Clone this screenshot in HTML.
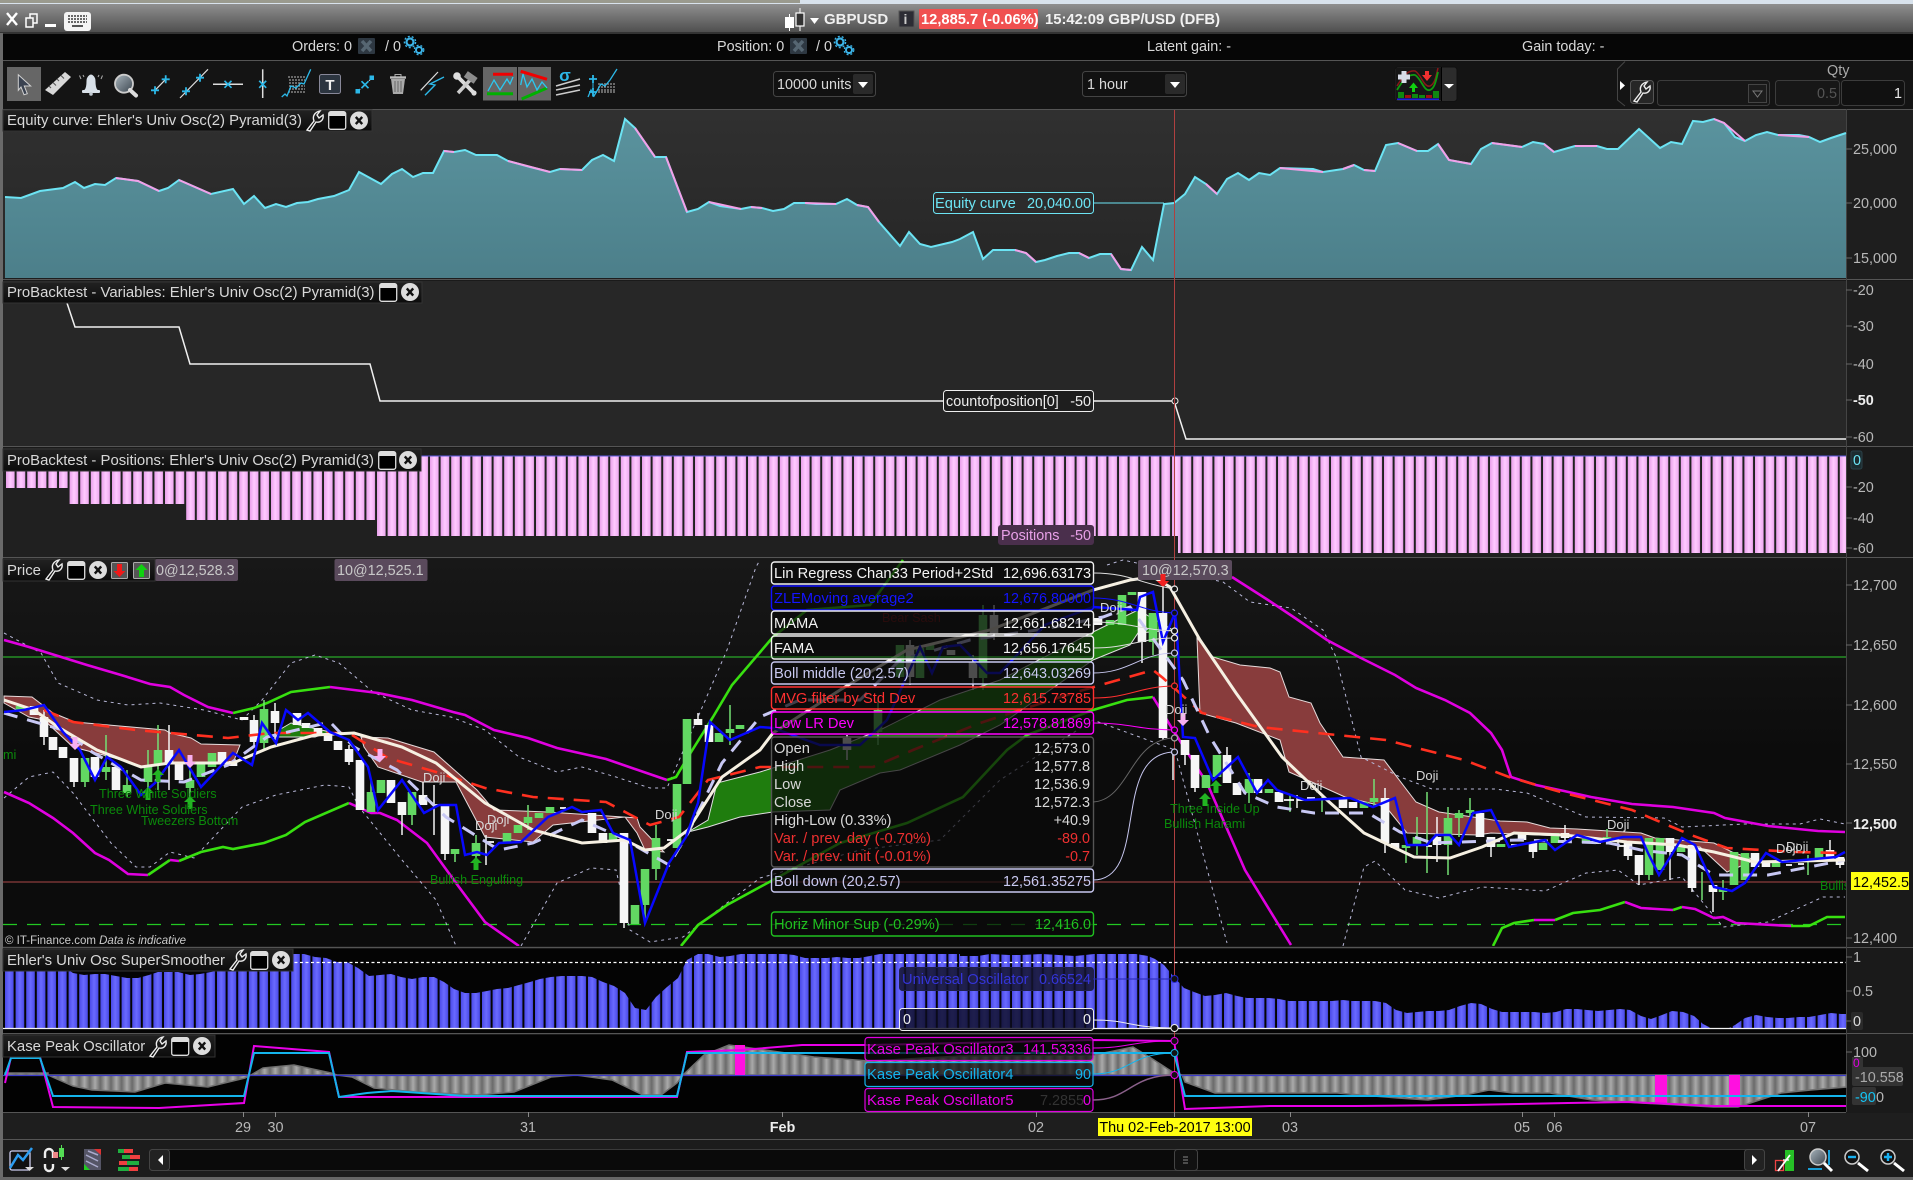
<!DOCTYPE html>
<html>
<head>
<meta charset="utf-8">
<title>GBPUSD chart</title>
<style>
html,body{margin:0;padding:0;background:#1a1a1a;width:1913px;height:1180px;overflow:hidden}
svg{display:block;position:absolute;left:0;top:0}
text{font-family:"Liberation Sans",sans-serif;font-size:14.4px;fill:#d8d8d8}
.t{font-size:14.9px}
.l{font-size:14.7px}
.ax{fill:#b8b8b8}
.end{text-anchor:end}
.mid{text-anchor:middle}
.pat{font-size:12.6px;fill:#0b8a0b}
.doj{font-size:13px;fill:#d8d8d8}
.none{fill:none}
</style>
</head>
<body>
<svg width="1913" height="1180" viewBox="0 0 1913 1180" xmlns="http://www.w3.org/2000/svg">
<defs>
<linearGradient id="tb" x1="0" y1="0" x2="0" y2="1"><stop offset="0" stop-color="#8f8f8f"/><stop offset="1" stop-color="#4f4f4f"/></linearGradient>
<linearGradient id="eq" x1="0" y1="0" x2="0" y2="1"><stop offset="0" stop-color="#5a939e"/><stop offset="1" stop-color="#4c7f8a"/></linearGradient>
<linearGradient id="eb" x1="0" y1="0" x2="0" y2="1"><stop offset="0" stop-color="#303030"/><stop offset="1" stop-color="#262626"/></linearGradient>
<linearGradient id="pb" x1="0" y1="0" x2="0" y2="1"><stop offset="0" stop-color="#181818"/><stop offset=".5" stop-color="#0c0c0c"/><stop offset="1" stop-color="#0c0c0c"/></linearGradient>
<linearGradient id="tt" x1="0" y1="0" x2="0" y2="1"><stop offset="0" stop-color="#222"/><stop offset="1" stop-color="#0c0c0c"/></linearGradient>
<linearGradient id="pk" x1="0" y1="0" x2="1" y2="0"><stop offset="0" stop-color="#e8a0ea"/><stop offset=".5" stop-color="#ffcaff"/><stop offset="1" stop-color="#eea8f0"/></linearGradient>
<linearGradient id="bl" x1="0" y1="0" x2="1" y2="0"><stop offset="0" stop-color="#4a4ae8"/><stop offset=".5" stop-color="#6a6aff"/><stop offset="1" stop-color="#4a4ae8"/></linearGradient>
<linearGradient id="gy" x1="0" y1="0" x2="1" y2="0"><stop offset="0" stop-color="#6a6a6a"/><stop offset=".5" stop-color="#aaaaaa"/><stop offset="1" stop-color="#6a6a6a"/></linearGradient>
<linearGradient id="mg" x1="0" y1="0" x2="1" y2="1"><stop offset="0" stop-color="#a8b4bc"/><stop offset="1" stop-color="#3c4650"/></linearGradient>
<pattern id="ppk" patternUnits="userSpaceOnUse" x="6" y="0" width="10.6" height="20"><rect width="8.6" height="20" fill="url(#pk)"/></pattern>
<pattern id="pbl" patternUnits="userSpaceOnUse" x="5" y="0" width="10.6" height="20"><rect width="8.6" height="20" fill="url(#bl)"/></pattern>
<pattern id="pgy" patternUnits="userSpaceOnUse" x="5" y="0" width="10.6" height="20"><rect width="10.6" height="20" fill="url(#gy)"/></pattern>
<clipPath id="cp"><rect x="3" y="559" width="1843" height="387"/></clipPath>
<g id="wr"><path d="M1 20 L8 11 C6 6 9 2 14 1 L11 5 L13 8 L17 5 C18 10 14 13 10 12 L4 21Z" fill="none" stroke="#eee" stroke-width="1.4"/></g>
<g id="win"><rect x="0.7" y="0.7" width="17" height="17.6" rx="2" fill="#000" stroke="#ddd" stroke-width="1.3"/><rect x="1" y="1" width="16.4" height="4" fill="#ddd"/></g>
<g id="cl"><circle r="9" fill="#ddd"/><path d="M-3.2 -3.6L3.2 3.6M3.2 -3.6L-3.2 3.6" stroke="#111" stroke-width="2.4"/></g>
<g id="gr"><circle cx="4" cy="4" r="3.5" fill="none" stroke="#3cb4e8" stroke-width="2.2"/><circle cx="4" cy="4" r="5.6" fill="none" stroke="#3cb4e8" stroke-width="1.4" stroke-dasharray="2 2"/><circle cx="13" cy="12" r="3" fill="none" stroke="#3cb4e8" stroke-width="2"/><circle cx="13" cy="12" r="4.8" fill="none" stroke="#3cb4e8" stroke-width="1.2" stroke-dasharray="2 2"/></g>
<g id="xb"><rect width="17" height="16" rx="1" fill="#2e3842"/><path d="M4 3L13 13M13 3L4 13" stroke="#566672" stroke-width="3.5"/></g>
<polygon id="ua" points="0,0 6,6 2.5,6 2.5,13 -2.5,13 -2.5,6 -6,6"/>
<polygon id="da" points="0,13 6,7 2.5,7 2.5,0 -2.5,0 -2.5,7 -6,7"/>
<g id="cx"><path d="M-3.5 -3.5L3.5 3.5M3.5 -3.5L-3.5 3.5" stroke="#2cb8e8" stroke-width="1.7"/></g>
<g id="cp2"><path d="M-4 0H4M0 -4V4" stroke="#2cb8e8" stroke-width="1.8"/></g>
</defs>

<!-- chrome -->
<rect width="1913" height="1180" fill="#1a1a1a"/>
<rect width="1913" height="4" fill="#d8e2ec"/>
<rect y="0" width="800" height="3" fill="#9a9a8e"/>
<rect y="4" width="1913" height="28" fill="url(#tb)"/>
<rect y="32" width="1913" height="2" fill="#333"/>
<rect y="34" width="1913" height="26" fill="#060606"/>
<rect y="60" width="1913" height="1" fill="#555"/>
<rect y="61" width="1913" height="48" fill="#141414"/>
<rect x="0" y="33" width="3" height="1147" fill="#6a6a6a"/>

<!-- title bar -->
<path d="M7 13L17 25M17 13L7 25" stroke="#fff" stroke-width="2.4"/>
<path d="M26 18h7v9h-7zM30 18v-4h7v9h-4" fill="none" stroke="#fff" stroke-width="1.5"/>
<rect x="45" y="24" width="11" height="3" fill="#fff"/>
<rect x="64" y="12" width="27" height="19" rx="3" fill="#f4f4f4"/>
<path d="M68 16h19M68 19h19M68 22h19" stroke="#555" stroke-width="1.8" stroke-dasharray="2 1"/><rect x="72" y="25" width="11" height="2" fill="#555"/>
<rect x="785" y="17" width="9" height="11" fill="#fff"/><path d="M789.500 14v17" stroke="#fff"/>
<rect x="796" y="13" width="8" height="13" fill="#333" stroke="#fff" stroke-width="1.2"/><path d="M800 8v5M800 26v5" stroke="#fff"/>
<path d="M810 18h9l-4.500 6z" fill="#fff"/>
<text x="824" y="24" style="font-size:15px;font-weight:bold;fill:#f0f0f0">GBPUSD</text>
<rect x="899" y="11" width="15" height="16" fill="#2c2c34" stroke="#555"/><text x="903.500" y="24" style="font-size:14px;font-weight:bold;fill:#ccc">i</text>
<rect x="919" y="9" width="119" height="20" rx="1" fill="#f05050"/>
<text x="921" y="24" style="font-size:14.700px;font-weight:bold;fill:#fff">12,885.7 (-0.06%)</text>
<text x="1045" y="24" style="font-size:15px;fill:#f2f2f2;font-weight:bold" textLength="175" lengthAdjust="spacingAndGlyphs">15:42:09 GBP/USD (DFB)</text>

<!-- orders row -->
<text x="292" y="51" >Orders: 0</text><use href="#xb" x="358" y="38"/><text x="385" y="51">/ 0</text><use href="#gr" x="406" y="38"/>
<text x="717" y="51">Position: 0</text><use href="#xb" x="790" y="38"/><text x="816" y="51">/ 0</text><use href="#gr" x="836" y="38"/>
<text x="1147" y="51">Latent gain: -</text>
<text x="1522" y="51">Gain today: -</text>

<!-- toolbar -->
<rect x="7" y="67" width="34" height="34" fill="#666"/>
<path d="M18.300 74.700L30.700 86L24.300 86L27.300 93.700L24 94.700L21 87L18.300 90.300Z" fill="#3a4250" stroke="#d0d0d0" stroke-width="1"/>
<polygon points="45,90 65,72 71,77 53,95" fill="#d8d8d8"/><path d="M49 86l2 2M53 82.500l3 3M57 79l2 2M61 75.500l3 3" stroke="#555" stroke-width="1.100"/>
<path d="M85 90C87 88 87 84 87 81C87 77 90 75 91 75C92 75 95 77 95 81C95 84 95 88 97 90Z" fill="#d8e0e8" stroke="#d8e0e8"/><rect x="82" y="90" width="18" height="3" rx="1" fill="#d8e0e8"/><circle cx="91" cy="94" r="1.800" fill="#c0c8d0"/>
<path d="M79.500 75.500L81 79M83 75L84 77M102.500 75.500L101 79M99 75L98 77" stroke="#aaa" stroke-width="1"/>
<circle cx="124" cy="83.700" r="9" fill="url(#mg)" stroke="#ccc" stroke-width="1.800"/><path d="M130 90L136 95.500" stroke="#ddd" stroke-width="4" stroke-linecap="round"/>
<path d="M155 90.300L165.700 79.300" stroke="#ddd" stroke-width="1.200"/><use href="#cp2" x="155" y="90.300"/><use href="#cp2" x="165.700" y="79.300"/>
<path d="M180 98L208 69.300" stroke="#ddd" stroke-width="1.200"/><use href="#cp2" x="186" y="91.300"/><use href="#cp2" x="200" y="77.700"/>
<path d="M213 84.300H243" stroke="#ddd" stroke-width="1.500"/><use href="#cx" x="228" y="84.300"/>
<path d="M262.700 69.300V98" stroke="#ddd" stroke-width="1.500"/><use href="#cx" x="262.700" y="84.300"/>
<path d="M288 77h17M289 80h16M289 83h13M289 86h16M289 89h16M288 92h17" stroke="#bbb" stroke-width="1" stroke-dasharray="2 1"/>
<path d="M281.700 97L285 94L287 96L291 86L296 88L301 83L304 84L310.700 69.300" fill="none" stroke="#2cb8e8" stroke-width="1.300"/>
<rect x="319.500" y="74.500" width="21" height="19" rx="2" fill="#2c3540" stroke="#889"/><text x="330" y="90" class="mid" style="font-size:15px;font-weight:bold;fill:#eee">T</text>
<path d="M358 91L372 78" stroke="#ddd" stroke-dasharray="3 2" stroke-width="1"/><rect x="355.500" y="89" width="4.500" height="4.500" fill="#2cb8e8"/><rect x="369.500" y="75.500" width="4.500" height="4.500" fill="#2cb8e8"/><use href="#cx" x="365" y="84.700"/>
<path d="M390 77.500h16" stroke="#bbb" stroke-width="2.400"/><path d="M395 76.500v-2h6v2" fill="none" stroke="#aaa"/><path d="M391 79h14l-2 15h-10z" fill="#aaa"/><path d="M395 81v11M398 81v11M401 81v11" stroke="#666"/>
<path d="M420.700 90.300L438 72" stroke="#ddd" stroke-width="1.200"/><path d="M425 95.300L435 85L430 84L444 77" fill="none" stroke="#2cb8e8" stroke-width="1.400"/>
<path d="M457 76L474 93" stroke="#ddd" stroke-width="3.800"/><circle cx="457" cy="76" r="3.800" fill="#ddd"/><circle cx="474" cy="93" r="2.600" fill="#ddd"/><path d="M472 78L458 93" stroke="#ccc" stroke-width="3.500"/><rect x="465" y="74" width="12" height="7" fill="#8c8c8c" transform="rotate(35 471 77)"/>
<rect x="483" y="67" width="34" height="33.500" fill="#666"/><rect x="518" y="67" width="33" height="33.500" fill="#666"/>
<path d="M493 74.300h20" stroke="#f00000" stroke-width="3"/><path d="M487 93.700h26" stroke="#00b000" stroke-width="3"/><path d="M488 91L494 80L500 90L507 79L510 84L513 77" fill="none" stroke="#2cc8f0" stroke-width="1.300"/>
<path d="M520.700 71.300L547 79.300" stroke="#f00000" stroke-width="3"/><path d="M521.700 99L547 88" stroke="#00b000" stroke-width="3"/><path d="M520.700 85L523 74L527 87L532 79L537 90L542 82L547 88" fill="none" stroke="#2cc8f0" stroke-width="1.300"/>
<text x="565" y="81" class="mid" style="font-size:17px;font-weight:bold;fill:#2cb8e8">σ</text>
<path d="M556 86L580 79M556 90L580 85M556 95L580 90" stroke="#ccc" stroke-width="1.500"/>
<path d="M598 84h17M598 87h17M598 90h17M598 92h17" stroke="#bbb" stroke-width="1" stroke-dasharray="2 1"/>
<path d="M588 97L591 90L594 96L601 84L605 86L610 80L617 69" fill="none" stroke="#2cb8e8" stroke-width="1.300"/><path d="M593 77V97" stroke="#2cb8e8"/><use href="#cp2" x="593" y="79"/><use href="#cp2" x="593" y="92"/>

<!-- dropdowns -->
<rect x="773.500" y="71.500" width="102" height="25" rx="3" fill="#111" stroke="#444"/>
<text x="777" y="89">10000 units</text>
<rect x="853" y="74" width="20" height="20" rx="2" fill="#2a2a2a"/><path d="M858 82h10l-5 6z" fill="#fff"/>
<rect x="1082.500" y="71.500" width="104" height="25" rx="3" fill="#111" stroke="#444"/>
<text x="1087" y="89">1 hour</text>
<rect x="1165" y="74" width="20" height="20" rx="2" fill="#2a2a2a"/><path d="M1170 82h10l-5 6z" fill="#fff"/>
<rect x="1395" y="67" width="62" height="34.500" rx="3" fill="#2c2c2c" stroke="#111"/>
<rect x="1396" y="68" width="45" height="32" fill="#161616"/><path d="M1441.500 67V101" stroke="#000"/>
<path d="M1397 86C1403 76 1408 70 1415 71C1421 74 1424 88 1430 86C1435 84 1436 76 1438 68" fill="none" stroke="#8a1818" stroke-width="1.500"/>
<path d="M1397 90C1403 80 1408 74 1415 75C1421 78 1424 92 1430 90C1435 88 1436 80 1438 72" fill="none" stroke="#109a10" stroke-width="1.800"/>
<path d="M1404 71v12M1398 77h12" stroke="#d8dce8" stroke-width="5"/>
<path d="M1425 71h4v4h3l-5 6l-5-6h3z" fill="#f03030"/><path d="M1412 92h3v-4h3l-4.500-5.500l-4.500 5.500h3z" fill="#10d010"/>
<rect x="1398" y="92" width="6" height="6" fill="#108810"/><rect x="1405" y="95" width="6" height="3" fill="#a01010"/><rect x="1412" y="94" width="6" height="4" fill="#108810"/><rect x="1419" y="95" width="6" height="3" fill="#108810"/><rect x="1426" y="95" width="6" height="3" fill="#a01010"/><rect x="1433" y="91" width="6" height="7" fill="#108810"/>
<rect x="1397" y="98.500" width="42" height="1.500" fill="#2020e0"/>
<path d="M1444 84h10l-5 4.500z" fill="#fff"/>
<path d="M1625 61.500L1617.500 69V100L1625 106" fill="none" stroke="#444"/>
<path d="M1620 81v9l5-4.500z" fill="#fff"/>
<rect x="1630.500" y="80.500" width="23" height="23" rx="3" fill="#262626" stroke="#555"/><use href="#wr" x="1633" y="81"/>
<rect x="1657.500" y="80.500" width="112" height="25" rx="3" fill="#171717" stroke="#3c3c3c"/>
<rect x="1748.500" y="84.500" width="18" height="18" fill="#1c1c1c" stroke="#444"/><path d="M1753 91h9l-4.500 6z" fill="none" stroke="#777"/>
<rect x="1775.500" y="80.500" width="64" height="25" rx="3" fill="#171717" stroke="#3c3c3c"/><text x="1837" y="98" class="end" style="fill:#555">0.5</text>
<rect x="1841.500" y="80.500" width="63" height="25" rx="3" fill="#111" stroke="#3c3c3c"/><text x="1902" y="98" class="end" style="fill:#e8e8e8">1</text>
<text x="1827" y="75" style="font-size:14.400px;fill:#aaa">Qty</text>

<!-- panels backgrounds -->
<rect x="3" y="109" width="1910" height="170" fill="#1e1e1e"/>
<rect x="3" y="110" width="1843" height="168" fill="url(#eb)"/>
<rect x="3" y="281" width="1910" height="165" fill="#1e1e1e"/>
<rect x="3" y="281" width="1843" height="165" fill="#272727"/>
<rect x="3" y="448" width="1910" height="109" fill="#1a1a1a"/>
<rect x="3" y="448" width="1843" height="109" fill="#202020"/>
<rect x="3" y="559" width="1910" height="388" fill="#1a1a1a"/>
<rect x="3" y="559" width="1843" height="387" fill="url(#pb)"/>
<rect x="3" y="949" width="1910" height="84" fill="#1a1a1a"/>
<rect x="3" y="949" width="1843" height="84" fill="#040404"/>
<rect x="3" y="1035" width="1910" height="77" fill="#1a1a1a"/>
<rect x="3" y="1035" width="1843" height="77" fill="#020202"/>
<rect x="3" y="1113" width="1910" height="26" fill="#1e1e1e"/>
<rect x="3" y="1140" width="1910" height="37" fill="#1c1c1c"/>
<rect x="0" y="1177" width="1913" height="3" fill="#666"/>
<path d="M3 109.500H1913M3 279.500H1913M3 446.500H1913M3 557.500H1913M3 947.500H1913M3 1033.500H1913M3 1112.500H1846M3 1139.500H1913" stroke="#555"/>
<path d="M1846.500 109V1112" stroke="#444"/>

<!-- equity -->
<polygon fill="url(#eq)" points="5,278 5,197 21,198 40,191 63,188 75,182 84,188 95,184 105,185 116,178 138,181 159,191 168,188 179,180 211,194 233,189 244,204 254,196 265,208 276,204 286,207 297,203 308,202 318,199 334,196 349,190 359,172 381,184 392,174 402,169 413,177 423,173 433,173 444,151 454,152 465,150 476,155 497,155 508,161 530,167 550,172 560,169 582,170 592,160 603,155 614,161 625,119 635,128 655,157 666,157 687,212 698,209 709,202 720,206 741,209 751,207 762,208 773,211 784,209 794,203 805,203 816,204 836,204 847,199 857,205 868,207 879,222 900,246 909,232 920,244 931,247 952,242 960,239 973,232 983,259 993,250 1015,250 1026,253 1036,262 1045,260 1057,256 1069,253 1079,253 1089,258 1100,254 1111,254 1121,269 1131,270 1142,247 1153,260 1164,204 1174,203 1185,194 1195,177 1206,184 1217,194 1227,179 1238,173 1249,180 1259,173 1270,175 1280,168 1313,169 1323,172 1343,169 1354,165 1364,170 1375,171 1386,145 1398,143 1417,151 1428,151 1438,144 1449,160 1471,164 1481,149 1492,143 1522,147 1533,142 1544,144 1554,152 1575,146 1597,146 1607,149 1618,149 1639,129 1660,148 1671,142 1682,144 1693,121 1703,122 1714,119 1724,123 1735,137 1745,141 1756,135 1767,132 1778,135 1799,135 1809,137 1820,142 1831,138 1846,133 1846,278"/>
<polyline class="none" stroke="#6ce4f4" stroke-width="2" points="5,197 21,198 40,191 63,188 75,182 84,188 95,184 105,185 116,178 138,181 159,191 168,188 179,180 211,194 233,189 244,204 254,196 265,208 276,204 286,207 297,203 308,202 318,199 334,196 349,190 359,172 381,184 392,174 402,169 413,177 423,173 433,173 444,151 454,152 465,150 476,155 497,155 508,161 530,167 550,172 560,169 582,170 592,160 603,155 614,161 625,119 635,128 655,157 666,157 687,212 698,209 709,202 720,206 741,209 751,207 762,208 773,211 784,209 794,203 805,203 816,204 836,204 847,199 857,205 868,207 879,222 900,246 909,232 920,244 931,247 952,242 960,239 973,232 983,259 993,250 1015,250 1026,253 1036,262 1045,260 1057,256 1069,253 1079,253 1089,258 1100,254 1111,254 1121,269 1131,270 1142,247 1153,260 1164,204 1174,203 1185,194 1195,177 1206,184 1217,194 1227,179 1238,173 1249,180 1259,173 1270,175 1280,168 1313,169 1323,172 1343,169 1354,165 1364,170 1375,171 1386,145 1398,143 1417,151 1428,151 1438,144 1449,160 1471,164 1481,149 1492,143 1522,147 1533,142 1544,144 1554,152 1575,146 1597,146 1607,149 1618,149 1639,129 1660,148 1671,142 1682,144 1693,121 1703,122 1714,119 1724,123 1735,137 1745,141 1756,135 1767,132 1778,135 1799,135 1809,137 1820,142 1831,138 1846,133"/>
<path class="none" stroke="#f2a0e8" stroke-width="2" d="M116 178L138 181L159 191M179 180L211 194M444 151L454 152M508 161L550 172M560 169L582 170M635 128L655 157M666 157L687 212M709 202L741 209M751 207L762 208M805 203L836 204M857 205L868 207L879 222M1015 250L1026 253L1036 262M1079 253L1089 258M1111 254L1121 269L1131 270M1206 184L1217 194M1280 168L1323 172M1343 169L1354 165M1364 170L1375 171M1398 143L1417 151M1438 144L1449 160L1471 164M1492 143L1522 147M1544 144L1554 152M1575 146L1597 146M1714 119L1724 123L1745 141M1778 135L1809 137"/>

<!-- variables -->
<polyline class="none" stroke="#f0f0f0" stroke-width="1.500" points="67,303 75,327 179,327 190,364 370,364 380,401 1174,401 1186,439 1846,439"/>
<circle cx="1175" cy="401" r="3" fill="#222" stroke="#eee"/>

<!-- positions -->
<path fill="url(#ppk)" d="M5 456H68V488H5ZM68 456H186V504H68ZM186 456H376V520H186ZM376 456H1178V536H376ZM1178 456H1846V553H1178Z"/>
<path d="M3 456H1846" stroke="#5a5ae0"/>

<!-- vertical cursor -->
<path d="M1174.500 110V1112" stroke="#b04040"/>

<!-- price: grid -->
<path d="M3 657H1846" stroke="#2aa82a" stroke-width="1.300"/>
<path d="M3 882H1846" stroke="#8c3c3c" stroke-width="1.200"/>
<path d="M3 924.500H1846" stroke="#22c822" stroke-width="1.300" stroke-dasharray="14 10"/>
<g clip-path="url(#cp)">
<!-- clouds -->
<g fill="#883c3c" stroke="#e6dcdc" stroke-width="1">
<polygon points="4,696 32,697 53,713 75,722 165,730 170,733 191,738 201,744 240,745 233,763 170,763 145,767 111,757 73,747 44,720 29,717 4,703"/>
<polygon points="361,737 388,738 434,752 477,790 494,810 548,812 637,818 640,827 664,852 645,850 637,833 625,817 553,825 533,842 485,837 456,782 422,782 378,767 364,747"/>
<polygon points="1197,638 1213,657 1240,665 1270,668 1280,672 1289,697 1311,703 1320,723 1343,757 1384,760 1416,802 1439,812 1500,821 1527,822 1550,828 1577,829 1641,833 1655,838 1714,843 1732,852 1755,860 1727,872 1700,847 1641,843 1586,837 1491,833 1477,835 1407,833 1386,807 1345,797 1314,783 1289,772 1280,740 1236,723 1200,713"/>
</g>
<g fill="#1f7d0e" stroke="#e0e0e0" stroke-width="1">
<polygon points="279,730 291,723 330,732 315,737 276,737"/>
<polygon points="688,832 708,820 717,783 760,772 830,750 880,730 940,700 1000,680 1093,632 1138,610 1173,630 1138,633 1130,645 1093,660 1000,725 960,745 900,770 880,773 840,790 830,810 773,812 740,817 708,827"/>
</g>
<!-- bands -->
<g class="none" stroke="#b8b8d8" stroke-width="1" stroke-dasharray="3 4">
<polyline points="4,633 41,653 58,683 97,700 128,705 160,703 204,710 242,720 262,700 291,663 315,655 339,663 373,692 412,710 451,717 485,730 519,757 557,772 582,767 616,777 650,788 667,788 698,717 727,650 756,567 760,560"/>
<polyline points="1107,565 1123,560 1223,582 1250,602 1291,608 1323,630 1336,657 1361,757 1400,777 1432,789 1495,789 1527,793 1586,817 1664,818 1682,827 1745,824 1800,824 1820,819 1845,824"/>
<polyline points="4,798 29,777 53,772 73,793 111,843 136,867 150,867 170,852 194,858 242,807 276,795 325,785 349,787 359,807 402,860 436,900 456,946"/>
<polyline points="521,946 557,883 591,868 616,870 630,930 650,942 683,937 727,903 760,878 860,850 940,840 1000,780 1093,720 1175,750 1227,943"/>
<polyline points="1343,946 1364,867 1375,861 1405,890 1439,898 1482,887 1545,891 1586,873 1618,870 1639,885 1682,877 1723,927 1768,922 1823,897 1845,897"/>
</g>
<g class="none" stroke-width="2.600">
<polyline stroke="#e000e0" points="4,640 29,647 58,656 87,665 121,675 150,684 170,687 184,695 208,707 233,713"/>
<polyline stroke="#38e010" points="233,713 254,708 267,703 291,692 330,687"/>
<polyline stroke="#e000e0" points="330,687 378,693 412,700 453,712 465,715 494,730 528,738 557,748 606,759 667,780"/>
<polyline stroke="#38e010" points="667,780 676,777 688,757 713,717 732,685 773,637 807,610 870,605 903,560"/>
<polyline stroke="#e000e0" points="1232,577 1268,600 1295,618 1327,640 1359,657 1395,675 1416,688 1445,700 1470,713 1491,733 1502,750 1511,777 1536,785 1564,791 1591,797 1632,804 1673,807 1714,813 1725,818 1768,826 1818,831 1845,832"/>
<polyline stroke="#e000e0" points="4,792 29,803 53,818 73,833 95,853 109,860 128,874 148,875"/>
<polyline stroke="#38e010" points="148,875 170,860"/>
<polyline stroke="#e000e0" points="170,860 179,861"/>
<polyline stroke="#38e010" points="179,861 201,852 223,847 233,849 264,843 286,835 305,822 349,803"/>
<polyline stroke="#e000e0" points="349,803 371,813 380,813 397,820 427,843 456,883 485,922 519,946"/>
<polyline stroke="#38e010" points="681,946 698,925 727,905 760,887 773,880 840,843 907,823 963,797 1007,750 1027,735 1093,710 1127,700 1153,697"/>
<polyline stroke="#e000e0" points="1153,697 1173,730 1207,783 1245,870 1291,945"/>
<polyline stroke="#38e010" points="1493,946 1502,928 1514,923 1534,920"/>
<polyline stroke="#e000e0" points="1534,920 1555,920"/>
<polyline stroke="#38e010" points="1555,920 1573,913 1600,910 1625,902"/>
<polyline stroke="#e000e0" points="1625,902 1641,908 1673,910"/>
<polyline stroke="#38e010" points="1673,910 1682,907"/>
<polyline stroke="#e000e0" points="1682,907 1695,909 1714,918 1723,917 1736,923 1791,926"/>
<polyline stroke="#38e010" points="1791,926 1809,926 1827,917 1845,917"/>
</g>
<!-- candle wicks -->
<path class="none" stroke="#f4f4f4" stroke-width="1.500" d="M44 710V745M74 782V787M169 725V790M254 715V745M275 703V740M349 745V765M402 815V835M423 782V805M434 785V835M445 854V860M486 835V865M624 923V928M698 713V725M847 735V760M910 640V685M973 655V690M994 605V640M1142 642V663M1163 580V740M1173 750V780M1185 755V765M1195 788V792M1227 747V755M1385 788V853M1437 817V862M1491 847V857M1533 852V858M1628 856V860M1639 875V885M1670 852V880M1692 888V892M1713 887V912M1830 840V860M1297 795V808M1565 825V840M1618 838V850M1840 857V868"/>
<path class="none" stroke="#74e074" stroke-width="1.500" d="M85 782V787M106 735V780M127 770V797M148 750V795M158 725V790M190 760V800M264 700V750M371 780V812M412 815V825M455 854V862M476 835V860M528 805V830M645 905V920M656 825V880M730 705V745M878 700V745M983 605V690M1153 642V655M1249 773V803M1290 795V812M1322 797V812M1374 779V807M1406 848V863M1417 817V855M1427 792V873M1448 807V875M1459 810V837M1470 798V817M1607 829V843M1649 875V880M1702 872V900M1808 855V875M1723 880V900"/>
<!-- candle bodies -->
<path class="none" stroke="#f6f6f6" stroke-width="8.600" d="M34 706V715M44 717V737M53 737V750M63 747V758M74 758V782M95 757V777M116 767V790M169 750V763M179 763V780M222 752V762M233 761V766M244 717V720M254 720V742M275 711V723M297 713V725M306 723V728M318 728V735M328 735V741M338 741V750M349 749V762M360 760V810M391 780V803M402 802V815M423 795V805M445 805V854M592 813V833M603 833V843M624 833V923M698 719V725M709 725V742M847 738V750M910 645V677M951 650V655M973 662V678M994 615V633M1098 618V625M1142 592V642M1163 613V738M1185 740V755M1195 755V788M1227 755V783M1237 783V795M1258 779V793M1279 792V802M1343 798V808M1353 802V808M1385 798V843M1395 843V848M1437 837V845M1480 813V837M1491 837V847M1522 833V840M1533 843V852M1565 833V838M1628 842V856M1639 855V875M1670 838V852M1692 845V888M1713 885V892M1755 853V867M1766 862V867M1830 850V860M1840 857V865"/>
<path class="none" stroke="#62d862" stroke-width="8.600" d="M20 706V710M85 758V782M106 767V772M127 785V793M148 767V782M158 750V765M190 780V788M201 763V777M212 753V767M264 709V743M371 792V812M381 780V793M412 792V815M455 849V854M476 843V856M507 833V842M518 825V833M528 817V823M539 813V818M550 807V813M613 833V841M635 905V924M645 869V905M656 838V869M677 784V848M687 719V784M719 733V742M730 729V733M740 725V729M878 710V732M900 645V677M920 648V678M930 645V650M983 615V678M1110 620V625M1122 595V625M1132 592V595M1153 613V642M1206 775V788M1217 755V777M1249 779V793M1269 789V793M1364 802V808M1374 798V802M1406 845V848M1417 837V845M1448 818V845M1459 813V818M1470 810V813M1501 844V847M1543 843V850M1555 833V843M1586 839V843M1607 837V842M1649 838V875M1660 838V870M1681 846V852M1723 888V892M1734 852V885M1745 853V880M1776 863V867M1808 860V862M1819 848V860"/>
<path class="none" stroke="#fff" stroke-width="1.800" d="M434 805H442M486 842H494M560 808H566M667 840H674M1284 800H1294M1297 800H1305M1307 798H1315M1426 846H1432M1511 845H1517M1595 843H1601M1618 846H1626M1786 865H1792M1798 864H1804"/>
<!-- lines -->
<polyline class="none" stroke="#ff3020" stroke-width="2.600" stroke-dasharray="16 10" points="44,710 73,722 136,730 228,738 271,733 349,733 388,758 436,772 485,788 533,797 606,802 650,825 679,817 708,780 760,767 873,767 913,750 980,723 1073,693 1153,670 1163,678 1202,713 1259,727 1327,734 1386,740 1464,760 1509,777 1564,793 1632,810 1691,835 1727,848 1795,852 1841,853"/>
<polyline class="none" stroke="#c8c8f4" stroke-width="3" stroke-dasharray="14 10" points="4,713 63,730 92,752 141,780 184,782 228,765 267,737 330,722 354,747 397,770 446,817 499,850 533,843 582,820 620,837 669,865 688,833 722,763 760,717 800,700 860,700 900,660 970,640 1050,628 1103,617 1130,607 1183,680 1210,737 1245,793 1277,807 1314,813 1368,813 1400,832 1432,843 1518,840 1609,843 1641,850 1682,855 1714,875 1768,875 1809,867 1845,860"/>
<polyline class="none" stroke="#f6f0e2" stroke-width="3" points="4,700 34,710 58,727 97,750 141,767 170,763 233,763 271,747 315,735 354,733 402,747 436,763 485,803 533,830 582,843 625,840 645,850 664,848 688,830 722,777 760,750 773,733 840,690 907,650 990,630 1093,590 1130,580 1153,577 1170,587 1187,617 1200,640 1236,693 1282,757 1327,800 1364,833 1414,857 1450,858 1482,847 1514,833 1564,835 1627,842 1677,845 1714,852 1755,862 1845,860"/>
<polyline class="none" stroke="#0808ff" stroke-width="2.500" points="4,712 24,710 44,705 63,732 80,750 95,780 107,757 121,767 141,795 155,783 179,750 201,787 233,753 252,765 262,723 276,743 286,710 298,720 308,713 330,732 349,740 368,767 378,810 402,780 424,813 439,805 456,805 465,855 477,852 487,855 499,843 521,842 548,817 572,807 582,812 601,810 613,833 630,840 645,923 669,863 686,837 698,803 710,722 730,740 760,727 773,728 820,745 860,745 887,720 920,647 932,673 943,647 960,645 987,673 1000,673 1045,625 1093,607 1137,610 1140,597 1153,592 1163,642 1175,613 1177,633 1183,737 1195,738 1213,780 1238,757 1257,793 1268,780 1277,790 1305,800 1350,798 1373,807 1395,798 1407,845 1427,845 1436,835 1450,835 1459,845 1473,813 1491,810 1509,847 1545,840 1555,850 1577,835 1600,842 1623,837 1641,837 1648,853 1659,875 1682,838 1695,845 1714,887 1732,891 1745,883 1766,853 1782,862 1836,857 1845,852"/>
<!-- arrows -->
<g fill="#22b422"><use href="#ua" x="148" y="787"/><use href="#ua" x="158" y="769"/><use href="#ua" x="190" y="796"/><use href="#ua" x="476" y="857"/><use href="#ua" x="1205" y="793"/><use href="#ua" x="1216" y="780"/></g>
<g fill="#f8b0f0"><use href="#da" x="75" y="737"/><use href="#da" x="190" y="755"/><use href="#da" x="380" y="749"/><use href="#da" x="1183" y="713"/></g>
<use href="#da" x="1163" y="574" fill="#f02020"/>
<!-- pattern labels -->
<text x="99" y="798" class="pat">Three White Soldiers</text>
<text x="90" y="814" class="pat">Three White Soldiers</text>
<text x="141" y="825" class="pat">Tweezers Bottom</text>
<text x="430" y="884" class="pat">Bullish Engulfing</text>
<text x="3" y="759" class="pat">mi</text>
<text x="1170" y="813" class="pat">Three Inside Up</text>
<text x="1164" y="828" class="pat">Bullish Harami</text>
<text x="1820" y="890" class="pat">Bullis</text>
<text x="882" y="622" class="pat" style="fill:#7a1212">Bear Sash</text>
<g class="doj">
<text class="doj" x="423" y="782">Doji</text><text class="doj" x="487" y="824">Doji</text><text class="doj" x="475" y="830">Doji</text><text class="doj" x="655" y="819">Doji</text>
<text class="doj" x="1416" y="780">Doji</text><text class="doj" x="1300" y="790">Doji</text><text class="doj" x="1607" y="829">Doji</text><text class="doj" x="1776" y="853">Doji</text><text class="doj" x="1786" y="851">Doji</text>
<text class="doj" x="1100" y="612">Doji</text><text class="doj" x="1165" y="714">Doji</text>
</g>
<text x="5" y="944" style="font-size:11.500px;fill:#ccc">© IT-Finance.com  <tspan font-style="italic">Data is indicative</tspan></text>
</g>

<!-- position tags -->
<rect x="155" y="559" width="83" height="22" rx="2" fill="#5a4a5c"/><text x="156" y="575" style="fill:#c8c8c8">0@12,528.3</text>
<rect x="334.500" y="559" width="93" height="22" rx="2" fill="#5a4a5c"/><text x="337" y="575" style="fill:#c8c8c8">10@12,525.1</text>
<rect x="1138" y="560" width="94" height="20" rx="2" fill="#5a4a5c"/><text x="1142" y="575" style="fill:#c8c8c8">10@12,570.3</text>
<use href="#da" x="1163" y="574" fill="#f02020"/>

<!-- value boxes -->
<g fill="#0a0a0a" fill-opacity=".72" stroke-width="1.400">
<rect x="771.500" y="562" width="322" height="22" rx="3" stroke="#f0f0f0"/>
<rect x="771.500" y="586" width="322" height="24" rx="3" stroke="#1010ff"/>
<rect x="771.500" y="611" width="322" height="23" rx="3" stroke="#f0f0f0"/>
<rect x="771.500" y="636" width="322" height="23" rx="3" stroke="#f0f0f0"/>
<rect x="771.500" y="662" width="322" height="22" rx="3" stroke="#c8c8f0"/>
<rect x="771.500" y="687" width="322" height="22" rx="3" stroke="#ff3030"/>
<rect x="771.500" y="712" width="322" height="22" rx="3" stroke="#ff00ff"/>
<rect x="771.500" y="737" width="322" height="130" rx="3" stroke="#555"/>
<rect x="771.500" y="869" width="322" height="23" rx="3" stroke="#c8c8f0"/>
<rect x="771.500" y="912" width="322" height="24" rx="3" stroke="#20c020"/>
</g>
<path d="M771 657H1093" stroke="#2aa82a" stroke-opacity=".6"/>
<text x="774" y="578" class="l" style="fill:#f4f4f4">Lin Regress Chan33 Period+2Std</text><text x="1091" y="578" class="end" style="fill:#f4f4f4">12,696.63173</text>
<text x="774" y="603" class="l" style="fill:#1414ff">ZLEMoving average2</text><text x="1091" y="603" class="end" style="fill:#1414ff">12,676.80000</text>
<text x="774" y="628" class="l" style="fill:#f4f4f4">MAMA</text><text x="1091" y="628" class="end" style="fill:#f4f4f4">12,661.68214</text>
<text x="774" y="653" class="l" style="fill:#f4f4f4">FAMA</text><text x="1091" y="653" class="end" style="fill:#f4f4f4">12,656.17645</text>
<text x="774" y="678" class="l" style="fill:#c8c8f0">Boll middle (20,2.57)</text><text x="1091" y="678" class="end" style="fill:#c8c8f0">12,643.03269</text>
<text x="774" y="703" class="l" style="fill:#ff3030">MVG filter by Std Dev</text><text x="1091" y="703" class="end" style="fill:#ff3030">12,615.73785</text>
<text x="774" y="728" class="l" style="fill:#ff00ff">Low LR Dev</text><text x="1091" y="728" class="end" style="fill:#ff00ff">12,578.81869</text>
<text x="774" y="753" class="l">Open</text><text x="1090" y="753" class="end">12,573.0</text>
<text x="774" y="771" class="l">High</text><text x="1090" y="771" class="end">12,577.8</text>
<text x="774" y="789" class="l">Low</text><text x="1090" y="789" class="end">12,536.9</text>
<text x="774" y="807" class="l">Close</text><text x="1090" y="807" class="end">12,572.3</text>
<text x="774" y="825" class="l">High-Low (0.33%)</text><text x="1090" y="825" class="end">+40.9</text>
<text x="774" y="843" class="l" style="fill:#ee3030">Var. / prev. day (-0.70%)</text><text x="1090" y="843" class="end" style="fill:#ee3030">-89.0</text>
<text x="774" y="861" class="l" style="fill:#ee3030">Var. / prev. unit (-0.01%)</text><text x="1090" y="861" class="end" style="fill:#ee3030">-0.7</text>
<text x="774" y="886" class="l" style="fill:#c8c8f0">Boll down (20,2.57)</text><text x="1091" y="886" class="end" style="fill:#c8c8f0">12,561.35275</text>
<text x="774" y="929" class="l" style="fill:#20c020">Horiz Minor Sup (-0.29%)</text><text x="1091" y="929" class="end" style="fill:#20c020">12,416.0</text>

<!-- connectors -->
<g class="none" stroke-width="1">
<path stroke="#ddd" d="M1093 573C1130 573 1140 584 1175 589"/>
<path stroke="#1010ff" d="M1093 598C1130 598 1140 612 1175 613"/>
<path stroke="#ddd" d="M1093 622C1130 622 1140 630 1175 631"/>
<path stroke="#ddd" d="M1093 648C1130 648 1140 638 1175 638"/>
<path stroke="#c8c8f0" d="M1093 673C1130 673 1140 653 1175 653"/>
<path stroke="#ff3030" d="M1093 698C1130 698 1140 686 1175 686"/>
<path stroke="#ff00ff" d="M1093 723C1130 723 1140 730 1175 730"/>
<path stroke="#666" d="M1093 802C1130 800 1130 738 1175 738"/>
<path stroke="#c8c8f0" d="M1093 880C1150 880 1110 752 1175 752"/>
</g>
<g fill="#111" stroke-width="1.200">
<circle cx="1174.500" cy="589" r="3" stroke="#eee"/><circle cx="1174.500" cy="613" r="3" stroke="#2020ff"/><circle cx="1174.500" cy="631" r="3" stroke="#eee"/><circle cx="1174.500" cy="638" r="3" stroke="#eee"/><circle cx="1174.500" cy="653" r="3" stroke="#c8c8f0"/><circle cx="1174.500" cy="686" r="3" stroke="#ff3030"/><circle cx="1174.500" cy="730" r="3" stroke="#ff00ff"/><circle cx="1174.500" cy="738" r="3" stroke="#aaa"/><circle cx="1174.500" cy="752" r="3" stroke="#c8c8f0"/>
</g>

<!-- upper labels -->
<rect x="933.500" y="192.500" width="160" height="21" rx="3" fill="#2c2c2c" stroke="#6ce4f4"/>
<text x="935" y="208" class="l" style="fill:#6ce4f4">Equity curve</text><text x="1091" y="208" class="end" style="fill:#6ce4f4">20,040.00</text>
<path d="M1093 203H1164" stroke="#6ce4f4"/>
<rect x="943.500" y="390.500" width="150" height="21" rx="3" fill="#1e1e1e" stroke="#eee"/>
<text x="946" y="406" style="fill:#eee">countofposition[0]</text><text x="1091" y="406" class="end" style="fill:#eee">-50</text>
<rect x="998" y="525" width="96" height="20" rx="3" fill="#4a2f4c"/>
<text x="1001" y="540" style="fill:#e8a0e8">Positions</text><text x="1091" y="540" class="end" style="fill:#e8a0e8">-50</text>

<!-- panel titles -->
<rect x="3" y="110" width="369" height="21" fill="url(#tt)" stroke="#333"/>
<text x="7" y="125" class="t">Equity curve: Ehler's Univ Osc(2) Pyramid(3)</text>
<use href="#wr" x="306" y="110"/><use href="#win" x="328" y="111"/><use href="#cl" x="359" y="120.500"/>

<rect x="3" y="282" width="419" height="21" fill="url(#tt)" stroke="#333"/>
<text x="7" y="297" class="t">ProBacktest - Variables: Ehler's Univ Osc(2) Pyramid(3)</text>
<use href="#win" x="379" y="283"/><use href="#cl" x="410" y="292"/>

<rect x="3" y="449" width="418" height="22" fill="url(#tt)" stroke="#333"/>
<text x="7" y="465" class="t">ProBacktest - Positions: Ehler's Univ Osc(2) Pyramid(3)</text>
<use href="#win" x="378" y="451"/><use href="#cl" x="408" y="460"/>

<rect x="3" y="559" width="152" height="22" fill="url(#tt)" stroke="#333"/>
<text x="7" y="575" class="t">Price</text><use href="#wr" x="45" y="559"/><use href="#win" x="67" y="561"/><use href="#cl" x="98" y="570"/>
<rect x="111.500" y="562.500" width="16" height="16" rx="1" fill="#555" stroke="#aaa"/><use href="#da" x="119.500" y="564" fill="#f01818"/>
<rect x="133.500" y="562.500" width="16" height="16" rx="1" fill="#555" stroke="#aaa"/><use href="#ua" x="141.500" y="564" fill="#10d010"/>

<!-- ehlers -->
<polygon fill="url(#pbl)" points="5,971 70,971 73,973 84,975 95,974 105,974 116,976 127,978 138,978 149,975 158,972 178,972 190,975 200,974 211,972 293,954 304,954 315,957 326,958 337,962 347,962 358,968 369,976 380,975 391,974 401,977 412,979 423,977 434,977 444,982 454,989 465,993 476,993 487,991 497,989 508,988 519,985 530,982 540,979 551,977 562,976 582,976 592,977 603,982 614,986 625,993 635,1008 646,1010 656,997 667,987 678,978 687,960 698,954 708,954 720,957 730,956 741,954 784,954 794,955 805,958 827,958 837,957 848,958 859,958 870,956 880,954 960,954 960,956 978,956 990,954 1009,955 1021,955 1042,954 1075,956 1085,955 1094,954 1136,954 1148,956 1155,959 1164,965 1174,977 1184,988 1194,992 1205,996 1215,995 1226,993 1237,996 1247,998 1269,998 1279,999 1289,1001 1332,1001 1343,1000 1352,1001 1375,1001 1386,1003 1396,1010 1407,1013 1417,1012 1428,1011 1439,1011 1449,1010 1460,1006 1471,1003 1481,1004 1492,1009 1502,1012 1534,1012 1545,1013 1556,1012 1566,1009 1577,1009 1587,1010 1598,1011 1609,1010 1620,1009 1630,1010 1641,1016 1651,1019 1662,1015 1672,1011 1683,1012 1694,1016 1703,1024 1711,1028 1729,1028 1735,1025 1745,1018 1756,1015 1767,1017 1778,1018 1788,1018 1799,1017 1809,1017 1820,1015 1831,1013 1841,1014 1846,1014 1846,1028 5,1028"/>
<path d="M3 962.500H1846" stroke="#fff" stroke-width="1.300" stroke-dasharray="3 2.500"/>
<path d="M3 1028.500H1846" stroke="#f4f4f4" stroke-width="1.300"/>
<rect x="899.500" y="967.500" width="194" height="23" rx="3" fill="#14142e" fill-opacity=".85" stroke="#20204a"/>
<text x="902" y="984" class="l" style="fill:#3434d8">Universal Oscillator</text><text x="1091" y="984" class="end" style="fill:#3434d8">0.66524</text>
<rect x="899.500" y="1008.500" width="194" height="22" rx="3" fill="#0c0c20" fill-opacity=".8" stroke="#eee"/>
<text x="903" y="1024" style="fill:#eee">0</text><text x="1091" y="1024" class="end" style="fill:#eee">0</text>
<path d="M1093 979H1175" stroke="#2828b0"/><path d="M1093 1020C1130 1020 1130 1028 1175 1028" class="none" stroke="#eee"/>
<circle cx="1174.500" cy="979" r="3.500" fill="#111" stroke="#2828d0"/><circle cx="1174.500" cy="1028" r="3.500" fill="#111" stroke="#eee"/>
<rect x="3" y="949" width="290" height="22" fill="url(#tt)" stroke="#333"/>
<text x="7" y="965" class="t">Ehler's Univ Osc SuperSmoother</text>
<use href="#wr" x="229" y="949"/><use href="#win" x="250" y="951"/><use href="#cl" x="281" y="960"/>

<!-- kase -->
<polygon fill="url(#pgy)" stroke="#707070" stroke-width="1.500" points="5,1075 5,1073 48,1073 48,1075 73,1086 92,1090 135,1092 165,1083 208,1087 245,1078 251,1075 263,1068 294,1065 331,1073 337,1075 352,1077 374,1088 416,1092 478,1095 514,1092 551,1077 576,1075 612,1080 643,1095 661,1095 677,1083 683,1075 704,1055 729,1045 765,1050 814,1057 870,1061 960,1056 1094,1055 1133,1047 1154,1060 1174,1073 1182,1075 1185,1082 1215,1093 1288,1093 1337,1093 1398,1098 1428,1100 1465,1095 1489,1090 1513,1093 1550,1093 1592,1100 1641,1103 1714,1107 1738,1107 1781,1093 1811,1090 1846,1087 1846,1075"/>
<path d="M3 1075.500H1846" stroke="#3a3ac8" stroke-width="1.200"/>
<rect x="735" y="1045" width="10" height="30" fill="#ff10e0"/><rect x="1655" y="1075" width="12" height="29" fill="#ff10e0"/><rect x="1729" y="1075" width="11" height="32" fill="#ff10e0"/>
<polyline class="none" stroke="#e800e8" stroke-width="2" points="5,1083 11,1057 40,1057 53,1107 159,1108 244,1103 254,1046 329,1052 339,1097 677,1097 687,1052 741,1050 802,1045 870,1045 1094,1040 1174,1041 1185,1109 1270,1106 1355,1106 1465,1105 1568,1103 1629,1102 1714,1106 1846,1106"/>
<polyline class="none" stroke="#14b4ec" stroke-width="2" points="5,1075 11,1058 40,1058 53,1096 244,1096 254,1053 329,1053 339,1097 367,1093 392,1091 465,1096 677,1096 687,1053 1174,1053 1185,1096 1846,1096"/>
<rect x="865" y="1037.500" width="228" height="23" rx="3" fill="#0a0a0a" fill-opacity=".72" stroke="#e000e0" stroke-width="1.200"/>
<rect x="865" y="1062.500" width="228" height="24" rx="3" fill="#0a0a0a" fill-opacity=".72" stroke="#14b4ec" stroke-width="1.200"/>
<rect x="865" y="1088.500" width="228" height="23" rx="3" fill="#0a0a0a" fill-opacity=".9" stroke="#e000e0" stroke-width="1.200"/>
<text x="867" y="1054" class="t" style="fill:#e800e8">Kase Peak Oscillator3</text><text x="1091" y="1054" class="end" style="fill:#e800e8">141.53336</text>
<text x="867" y="1079" class="t" style="fill:#14b4ec">Kase Peak Oscillator4</text><text x="1091" y="1079" class="end" style="fill:#14b4ec">90</text>
<text x="867" y="1105" class="t" style="fill:#e800e8">Kase Peak Oscillator5</text><text x="1084" y="1105" class="end" style="fill:#333">7.2855</text><text x="1091" y="1105" class="end" style="fill:#e800e8">0</text>
<path class="none" stroke="#e800e8" d="M1093 1048C1130 1048 1130 1041 1175 1041"/>
<path class="none" stroke="#14b4ec" d="M1093 1074C1130 1074 1130 1053 1175 1053"/>
<path class="none" stroke="#8a608a" stroke-width="1.500" d="M1093 1100C1130 1100 1130 1075 1175 1075"/>
<circle cx="1174.500" cy="1041" r="3.500" fill="#111" stroke="#e800e8"/><circle cx="1174.500" cy="1053" r="3.500" fill="#111" stroke="#14b4ec"/><circle cx="1174.500" cy="1075" r="3.500" fill="#111" stroke="#e800e8"/>
<rect x="3" y="1035" width="212" height="22" fill="url(#tt)" stroke="#333"/>
<text x="7" y="1051" class="t">Kase Peak Oscillator</text>
<use href="#wr" x="149" y="1036"/><use href="#win" x="171" y="1037"/><use href="#cl" x="202" y="1046"/>

<!-- axes -->
<path stroke="#666" d="M1846 149H1852M1846 203H1852M1846 258H1852M1846 290H1852M1846 326H1852M1846 364H1852M1846 400H1852M1846 437H1852M1846 487H1852M1846 518H1852M1846 548H1852M1846 585H1852M1846 645H1852M1846 705H1852M1846 764H1852M1846 823H1852M1846 938H1852M1846 957H1852M1846 991H1852M1846 1021H1852M1846 1052H1852"/>
<g class="ax">
<text class="ax" x="1853" y="154">25,000</text><text class="ax" x="1853" y="208">20,000</text><text class="ax" x="1853" y="263">15,000</text>
<text class="ax" x="1853" y="295">-20</text><text class="ax" x="1853" y="331">-30</text><text class="ax" x="1853" y="369">-40</text><text x="1853" y="405" style="font-weight:bold;fill:#eee">-50</text><text class="ax" x="1853" y="442">-60</text>
<text class="ax" x="1853" y="492">-20</text><text class="ax" x="1853" y="523">-40</text><text class="ax" x="1853" y="553">-60</text>
<text class="ax" x="1853" y="590">12,700</text><text class="ax" x="1853" y="650">12,650</text><text class="ax" x="1853" y="710">12,600</text><text class="ax" x="1853" y="769">12,550</text><text x="1853" y="829" style="font-weight:bold;fill:#eee">12,500</text><text class="ax" x="1853" y="943">12,400</text>
<text class="ax" x="1853" y="962">1</text><text class="ax" x="1853" y="996">0.5</text>
<text class="ax" x="1853" y="1057">100</text>
</g>
<rect x="1851" y="451" width="11" height="18" rx="2" fill="#1c2c30" stroke="#2a4048"/><text x="1853" y="465" style="fill:#6ce4f4">0</text>
<rect x="1851" y="872" width="58" height="18" fill="#ffff10"/><text x="1853" y="887" style="fill:#000">12,452.5</text>
<rect x="1851" y="1012" width="12" height="18" rx="2" fill="#2a2a2a"/><text x="1853" y="1026" style="fill:#ddd">0</text>
<rect x="1852" y="1057" width="11" height="11" fill="#333"/><text x="1853" y="1067" style="font-size:12px;fill:#e000e0">0</text>
<rect x="1852" y="1067" width="51" height="19" rx="2" fill="#333"/><text x="1855" y="1082" style="fill:#aaa">-10.558</text>
<rect x="1852" y="1087" width="24" height="18" rx="2" fill="#333"/><text x="1855" y="1102" style="fill:#14c4f4">-90</text>
<text x="1876" y="1102" class="ax">0</text>

<!-- time axis -->
<path stroke="#888" d="M243.500 1112v5M275.500 1112v5M528.500 1112v5M782.500 1112v5M1036.500 1112v5M1174.500 1112v5M1290.500 1112v5M1522.500 1112v5M1554.500 1112v5M1808.500 1112v5"/>
<g>
<text class="ax mid" x="243" y="1132">29</text><text class="ax mid" x="275.500" y="1132">30</text><text class="ax mid" x="528" y="1132">31</text>
<text class="mid" x="782.500" y="1132" style="font-weight:bold;fill:#eee">Feb</text>
<text class="ax mid" x="1036" y="1132">02</text><text class="ax mid" x="1290" y="1132">03</text><text class="ax mid" x="1522" y="1132">05</text><text class="ax mid" x="1554.500" y="1132">06</text><text class="ax mid" x="1808" y="1132">07</text>
</g>
<rect x="1098" y="1118" width="154" height="18" fill="#ffff10"/>
<text x="1175" y="1132" class="mid" style="fill:#000">Thu 02-Feb-2017 13:00</text>

<!-- bottom toolbar -->
<rect x="149.500" y="1149.500" width="1615" height="21" rx="3" fill="#0a0a0a" stroke="#3a3a3a"/>
<rect x="149.500" y="1149.500" width="20" height="21" rx="3" fill="#222" stroke="#444"/><path d="M163 1155v10l-5-5z" fill="#fff"/>
<rect x="1744.500" y="1149.500" width="20" height="21" rx="3" fill="#222" stroke="#444"/><path d="M1752 1155v10l5-5z" fill="#fff"/>
<rect x="1174.500" y="1149.500" width="23" height="21" rx="3" fill="#111" stroke="#444"/><path d="M1183 1157h5M1183 1160h5M1183 1163h5" stroke="#888"/>
<rect x="10" y="1151" width="20" height="19" rx="2" fill="#111" stroke="#cce" stroke-width="1.300"/><path d="M10 1168L18 1155L23 1160L32 1148" fill="none" stroke="#2c9cf0" stroke-width="2.500"/><path d="M25 1167h9l-4.500 4z" fill="#ddd"/>
<path d="M45 1158V1153a4 4 0 0 1 8 0V1158M45 1164V1167a4 4 0 0 0 8 0V1164" fill="none" stroke="#eee" stroke-width="2.400"/><rect x="53" y="1152" width="5" height="6" fill="#e88"/><rect x="59" y="1148" width="5" height="9" fill="#5d5"/><path d="M61.500 1145v15" stroke="#5d5"/><path d="M61 1167h9l-4.500 4z" fill="#ddd"/>
<g transform="translate(0,-5)"><rect x="84" y="1154" width="17" height="21" fill="#556"/><path d="M86 1160l12 6M86 1166l12 6M88 1156l10 4" stroke="#aac" stroke-width="1.500"/><path d="M94 1154h7v6z" fill="#d33"/><path d="M84 1175v-6l6 6z" fill="#2c2"/></g>
<g transform="translate(0,-3)"><g fill="#f04040"><rect x="124" y="1152" width="9" height="4"/><rect x="130" y="1158" width="10" height="4"/><rect x="119" y="1164" width="8" height="4"/><rect x="129" y="1170" width="9" height="4"/></g>
<g fill="#20b040"><rect x="118" y="1152" width="6" height="4"/><rect x="122" y="1158" width="8" height="4"/><rect x="127" y="1164" width="12" height="4"/><rect x="118" y="1170" width="11" height="4"/></g></g>
<rect x="1785" y="1150" width="9" height="21" fill="#26c026"/><rect x="1775.500" y="1160.500" width="8" height="10" fill="none" stroke="#e44" stroke-width="1.300"/><path d="M1778 1171L1790 1155" stroke="#fff" stroke-width="1.800"/><path d="M1783 1160h6" stroke="#fff" stroke-width="1.300"/>
<circle cx="1818" cy="1157" r="8" fill="url(#mg)" stroke="#ccc" stroke-width="1.500"/><path d="M1824 1163L1832 1171" stroke="#fff" stroke-width="3"/><path d="M1829 1150v15M1808 1169h14" stroke="#18b0f0" stroke-width="1.800"/>
<circle cx="1852" cy="1157" r="7" fill="#111" stroke="#ccc" stroke-width="1.500"/><path d="M1848 1157h8" stroke="#18b0f0" stroke-width="2.400"/><path d="M1858 1163L1868 1171" stroke="#fff" stroke-width="3"/>
<circle cx="1888" cy="1157" r="7" fill="#111" stroke="#ccc" stroke-width="1.500"/><path d="M1884 1157h8M1888 1153v8" stroke="#18b0f0" stroke-width="2.400"/><path d="M1894 1163L1904 1171" stroke="#fff" stroke-width="3"/>
</svg>
</body>
</html>
